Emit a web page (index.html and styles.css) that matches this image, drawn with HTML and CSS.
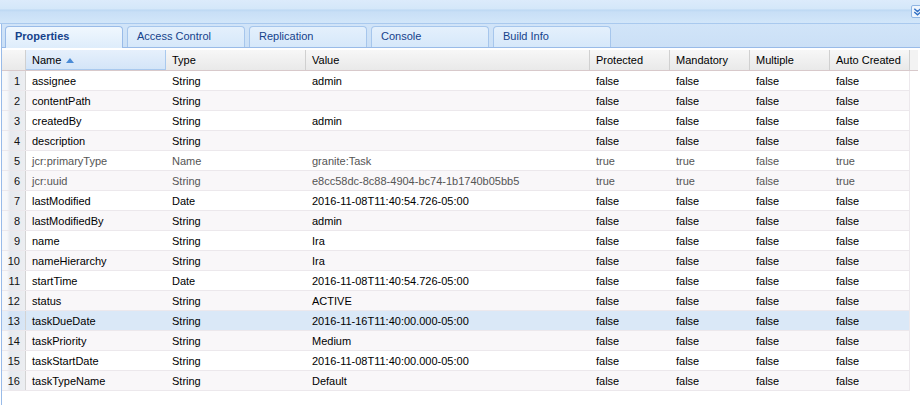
FILE: index.html
```html
<!DOCTYPE html>
<html>
<head>
<meta charset="utf-8">
<link rel="stylesheet" href="styles.css">
</head>
<body>
<div class="topbar">
  <span class="collapse"><svg width="12" height="12" viewBox="0 0 12 12"><path d="M2.5 2.5 L6 5.5 L9.5 2.5 M2.5 6 L6 9 L9.5 6" fill="none" stroke="#2f6fc4" stroke-width="1.6"/></svg></span>
</div>
<div class="panel">
  <div class="tabstrip">
    <div class="tab active">Properties</div>
    <div class="tab">Access Control</div>
    <div class="tab">Replication</div>
    <div class="tab">Console</div>
    <div class="tab">Build Info</div>
  </div>
  <div class="body">
    <div class="grid">
      <div class="hrow">
        <div class="c rn"></div>
        <div class="c w140 sorted">Name <span class="arrow"></span></div>
        <div class="c w140">Type</div>
        <div class="c w284">Value</div>
        <div class="c w80">Protected</div>
        <div class="c w80">Mandatory</div>
        <div class="c w80">Multiple</div>
        <div class="c w80">Auto Created</div>
        <div class="c fill"></div>
      </div>
      <div class="row"><div class="c rn">1</div><div class="c w140">assignee</div><div class="c w140">String</div><div class="c w284">admin</div><div class="c w80">false</div><div class="c w80">false</div><div class="c w80">false</div><div class="c w80">false</div></div>
      <div class="row alt"><div class="c rn">2</div><div class="c w140">contentPath</div><div class="c w140">String</div><div class="c w284"></div><div class="c w80">false</div><div class="c w80">false</div><div class="c w80">false</div><div class="c w80">false</div></div>
      <div class="row"><div class="c rn">3</div><div class="c w140">createdBy</div><div class="c w140">String</div><div class="c w284">admin</div><div class="c w80">false</div><div class="c w80">false</div><div class="c w80">false</div><div class="c w80">false</div></div>
      <div class="row alt"><div class="c rn">4</div><div class="c w140">description</div><div class="c w140">String</div><div class="c w284"></div><div class="c w80">false</div><div class="c w80">false</div><div class="c w80">false</div><div class="c w80">false</div></div>
      <div class="row prot"><div class="c rn">5</div><div class="c w140">jcr:primaryType</div><div class="c w140">Name</div><div class="c w284">granite:Task</div><div class="c w80">true</div><div class="c w80">true</div><div class="c w80">false</div><div class="c w80">true</div></div>
      <div class="row alt prot"><div class="c rn">6</div><div class="c w140">jcr:uuid</div><div class="c w140">String</div><div class="c w284">e8cc58dc-8c88-4904-bc74-1b1740b05bb5</div><div class="c w80">true</div><div class="c w80">true</div><div class="c w80">false</div><div class="c w80">true</div></div>
      <div class="row"><div class="c rn">7</div><div class="c w140">lastModified</div><div class="c w140">Date</div><div class="c w284">2016-11-08T11:40:54.726-05:00</div><div class="c w80">false</div><div class="c w80">false</div><div class="c w80">false</div><div class="c w80">false</div></div>
      <div class="row alt"><div class="c rn">8</div><div class="c w140">lastModifiedBy</div><div class="c w140">String</div><div class="c w284">admin</div><div class="c w80">false</div><div class="c w80">false</div><div class="c w80">false</div><div class="c w80">false</div></div>
      <div class="row"><div class="c rn">9</div><div class="c w140">name</div><div class="c w140">String</div><div class="c w284">Ira</div><div class="c w80">false</div><div class="c w80">false</div><div class="c w80">false</div><div class="c w80">false</div></div>
      <div class="row alt"><div class="c rn">10</div><div class="c w140">nameHierarchy</div><div class="c w140">String</div><div class="c w284">Ira</div><div class="c w80">false</div><div class="c w80">false</div><div class="c w80">false</div><div class="c w80">false</div></div>
      <div class="row"><div class="c rn">11</div><div class="c w140">startTime</div><div class="c w140">Date</div><div class="c w284">2016-11-08T11:40:54.726-05:00</div><div class="c w80">false</div><div class="c w80">false</div><div class="c w80">false</div><div class="c w80">false</div></div>
      <div class="row alt"><div class="c rn">12</div><div class="c w140">status</div><div class="c w140">String</div><div class="c w284">ACTIVE</div><div class="c w80">false</div><div class="c w80">false</div><div class="c w80">false</div><div class="c w80">false</div></div>
      <div class="row sel"><div class="c rn">13</div><div class="c w140">taskDueDate</div><div class="c w140">String</div><div class="c w284">2016-11-16T11:40:00.000-05:00</div><div class="c w80">false</div><div class="c w80">false</div><div class="c w80">false</div><div class="c w80">false</div></div>
      <div class="row alt"><div class="c rn">14</div><div class="c w140">taskPriority</div><div class="c w140">String</div><div class="c w284">Medium</div><div class="c w80">false</div><div class="c w80">false</div><div class="c w80">false</div><div class="c w80">false</div></div>
      <div class="row"><div class="c rn">15</div><div class="c w140">taskStartDate</div><div class="c w140">String</div><div class="c w284">2016-11-08T11:40:00.000-05:00</div><div class="c w80">false</div><div class="c w80">false</div><div class="c w80">false</div><div class="c w80">false</div></div>
      <div class="row alt"><div class="c rn">16</div><div class="c w140">taskTypeName</div><div class="c w140">String</div><div class="c w284">Default</div><div class="c w80">false</div><div class="c w80">false</div><div class="c w80">false</div><div class="c w80">false</div></div>
    </div>
  </div>
</div>
</body>
</html>
```
FILE: styles.css
```css
html, body {
  margin: 0;
  padding: 0;
  background: #fff;
  font-family: "Liberation Sans", Arial, sans-serif;
  font-size: 11px;
  color: #000;
  overflow: hidden;
}
.topbar {
  height: 23px;
  border-bottom: 1px solid #a9c9ee;
  background: linear-gradient(#dcebfb 0, #d4e7f9 9px, #bcd8f3 10px, #c8dff6 12px, #d2e6f9 23px);
  display: flex;
  justify-content: flex-end;
  align-items: flex-start;
  position: relative;
}
.collapse {
  position: absolute;
  top: 5px;
  left: 911px;
  width: 13px;
  height: 13px;
  box-sizing: border-box;
  border: 1px solid #8fb5e3;
  border-radius: 2px;
  background: #eef5fd;
  display: flex;
  align-items: center;
  justify-content: center;
}
.panel {
  margin-left: 1px;
  border-left: 1px solid #99bbe8;
  height: 381px;
}
.tabstrip {
  height: 23px;
  background: linear-gradient(#d1e4f8, #cbe0f6);
  border-bottom: 1px solid #99bbe8;
  display: flex;
  align-items: flex-end;
  padding-left: 3px;
  gap: 4px;
}
.tab {
  box-sizing: border-box;
  width: 118px;
  height: 21px;
  border: 1px solid #a6c6ec;
  border-bottom: none;
  border-radius: 4px 4px 0 0;
  background: linear-gradient(#e4f0fc, #d6e8fa);
  color: #15428b;
  padding: 2px 0 0 9px;
  line-height: 14px;
}
.tab.active {
  background: linear-gradient(#f0f7fe, #deedfb);
  font-weight: bold;
  height: 22px;
  margin-bottom: -1px;
  border-color: #99bbe8;
  color: #15428b;
}
.body {
  padding-top: 2px;
}
.grid {
  width: 916px;
}
.hrow, .row {
  display: flex;
}
.hrow {
  height: 20px;
  background: linear-gradient(#f7f7f7, #e9e9e9);
  border-bottom: 1px solid #d8c9cb;
}
.hrow .c {
  border-right: 1px solid #d0d0d0;
  line-height: 21px;
  color: #000;
}
.hrow .c.sorted {
  background: linear-gradient(#e6f0fc, #d4e5f8);
  border-right: 1px solid #a9c9ee;
  border-bottom: 1px solid #a9c9ee;
  height: 20px;
}
.hrow .rn {
  background: linear-gradient(#f7f7f7, #e9e9e9);
}
.c {
  box-sizing: border-box;
  padding-left: 6px;
  white-space: nowrap;
  overflow: hidden;
  flex: none;
}
.rn {
  width: 24px;
  text-align: right;
  padding: 0 5px 0 0;
  background: linear-gradient(to right, #f7f8fa 0, #f7f8fa 5px, #e6e9ee 8px, #eceef1 23px);
  border-right: 1px solid #d3d3d3;
  color: #111;
}
.w140 { width: 140px; }
.w284 { width: 284px; }
.w80 { width: 80px; }
.fill { width: 8px; padding: 0; border-right: none !important; background: #f3f3f3; }
.row {
  width: 908px;
  height: 20px;
  box-sizing: border-box;
  border-bottom: 1px solid #ece8ec;
  border-right: 1px solid #ece8ec;
  background: #fff;
  line-height: 21px;
}
.row.alt { background: #f9f7f9; }
.row.sel { background: #dae8f7; }
.row.sel .rn { background: linear-gradient(to right, #e3eefa 0, #e3eefa 5px, #d2e2f4 8px, #d8e6f6 23px); }
.row.prot { color: #555; }
.row.prot .rn { color: #111; }
.arrow {
  display: inline-block;
  width: 0;
  height: 0;
  border-left: 4px solid transparent;
  border-right: 4px solid transparent;
  border-bottom: 5px solid #4a8bd6;
  margin-left: 2px;
  vertical-align: 1px;
}
```
